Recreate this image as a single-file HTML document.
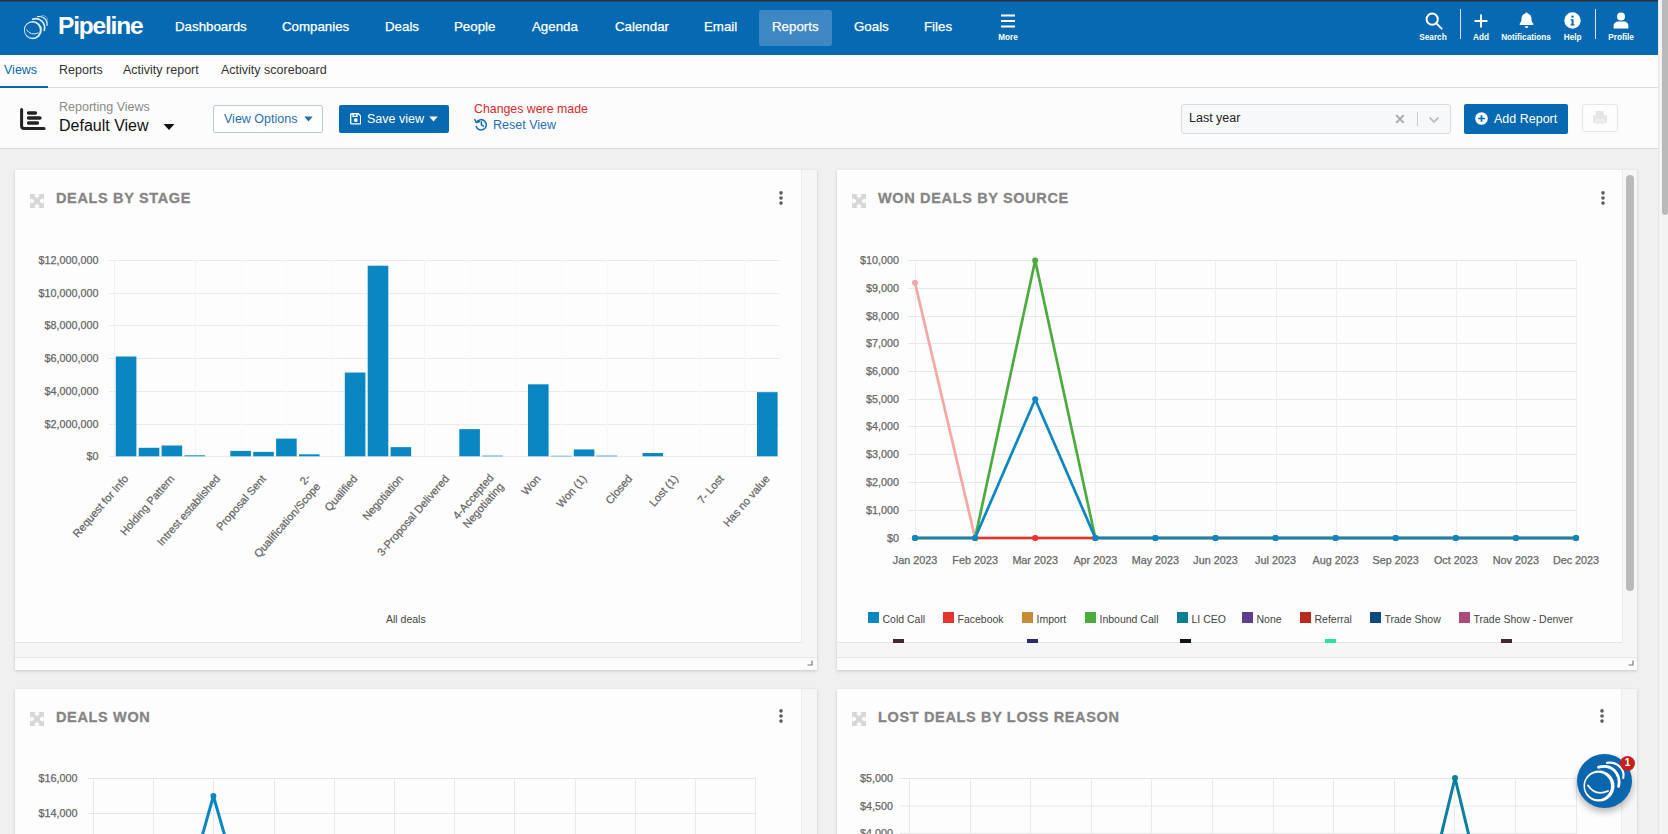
<!DOCTYPE html>
<html lang="en"><head><meta charset="utf-8"><title>Pipeline - Reports</title>
<style>
*{box-sizing:border-box;margin:0;padding:0}
html,body{width:1668px;height:834px;overflow:hidden;background:#f0f0f0;font-family:"Liberation Sans", "DejaVu Sans", sans-serif;}
body{position:relative}
.abs{position:absolute;white-space:nowrap;line-height:1}
#topline{left:0;top:0;width:1668px;height:2px;background:linear-gradient(#2f2f2f 0,#2f2f2f 1px,#1e4e78 1px)}
#nav{left:0;top:2px;width:1658px;height:53px;background:#0669b1}
.nv{color:#fff;font-size:13.3px;top:20px;-webkit-text-stroke:0.25px #fff}
.ni{color:#fff;font-size:8.2px;font-weight:bold;top:33.5px;text-align:center}
#sub{left:0;top:55px;width:1658px;height:33px;background:#fdfdfd;border-bottom:1px solid #dcdcdc}
.sb{font-size:12.5px;color:#333;top:64.4px}
#tool{left:0;top:88px;width:1658px;height:61px;background:#fcfcfc;border-bottom:1px solid #d8d8d8}
#vscroll{left:1658px;top:0;width:10px;height:834px;background:#f3f3f3;border-left:1px solid #e6e6e6}
#vthumb{left:1662px;top:0;width:6px;height:215px;background:#b9b9b9;border-radius:0 0 3px 3px}
.card{background:#f6f6f6;box-shadow:0 1px 3px rgba(0,0,0,.18)}
.inner{background:#fdfdfd;border-right:1px solid #ececec;border-bottom:1px solid #e4e4e4}
.ttl{font-size:14.5px;font-weight:bold;color:#858585;letter-spacing:0.65px;-webkit-text-stroke:0.3px #858585}
.lg{font-size:10.5px;color:#444}
svg text{font-family:"Liberation Sans", "DejaVu Sans", sans-serif;stroke:#666;stroke-width:0.25px}
</style></head>
<body>
<div class="abs" id="topline"></div>
<div class="abs" id="nav"></div>
<svg class="abs" style="left:23.300px;top:15px" width="25" height="25" viewBox="0 0 43 43" fill="none" stroke="#e3eff9" stroke-linecap="round"><path fill-rule="evenodd" d="M17 10.500a15.500 15.500 0 1 0 0 31a15.500 15.500 0 1 0 0-31zM16 12.800a13 13.200 0 1 1 0 26.400a13 13.200 0 1 1 0-26.400z" fill="#e3eff9" stroke="none"/><path d="M6 25.500Q13.500 36.500 26 31" stroke-width="1.700"/><path d="M16.500 7.200C29 3.500 39.500 13 36.600 26.500" stroke-width="2.800"/><path d="M25 2.800C35.500 1.300 43 9 41.200 18" stroke-width="2.100"/><path d="M32 0.800C38 0.500 42.500 4 42.600 9" stroke-width="1.200" opacity=".7"/></svg>
<div class="abs" style="left:58px;top:14px;font-size:24.5px;font-weight:bold;color:#fff;letter-spacing:-1.2px">Pipeline</div>
<div class="abs" style="left:759px;top:10px;width:73px;height:36px;background:#3f87c3;border-radius:3px"></div>
<div class="abs nv" id="nv_Dashboards" style="left:175px">Dashboards</div>
<div class="abs nv" id="nv_Companies" style="left:282px">Companies</div>
<div class="abs nv" id="nv_Deals" style="left:385px">Deals</div>
<div class="abs nv" id="nv_People" style="left:454px">People</div>
<div class="abs nv" id="nv_Agenda" style="left:532px">Agenda</div>
<div class="abs nv" id="nv_Calendar" style="left:615px">Calendar</div>
<div class="abs nv" id="nv_Email" style="left:704px">Email</div>
<div class="abs nv" id="nv_Reports" style="left:772px">Reports</div>
<div class="abs nv" id="nv_Goals" style="left:854px">Goals</div>
<div class="abs nv" id="nv_Files" style="left:924px">Files</div>
<svg class="abs" style="left:1001px;top:14px" width="14" height="14" viewBox="0 0 14 14"><path d="M0 1.5h14M0 7h14M0 12.5h14" stroke="#fff" stroke-width="1.9"/></svg>
<div class="abs ni" style="left:988px;width:40px">More</div>
<svg class="abs" style="left:1425px;top:12px" width="18" height="18" viewBox="0 0 18 18" fill="none" stroke="#fff" stroke-width="2"><circle cx="7.2" cy="7.2" r="5.6"/><path d="M11.4 11.4L16.6 16.6" stroke-linecap="round"/></svg>
<div class="abs ni" style="left:1408px;width:50px">Search</div>
<div class="abs" style="left:1460px;top:9px;width:1px;height:30px;background:#d5e3f0"></div>
<svg class="abs" style="left:1474px;top:14px" width="14" height="14" viewBox="0 0 14 14"><path d="M7 0.5v13M0.5 7h13" stroke="#fff" stroke-width="2"/></svg>
<div class="abs ni" style="left:1461px;width:40px">Add</div>
<svg class="abs" style="left:1519px;top:12px" width="15" height="17" viewBox="0 0 15 17" fill="#fff"><path d="M7.5 0.5c0.7 0 1.2 0.5 1.2 1.1c2.4 0.6 3.8 2.6 3.8 5.2c0 2.6 0.7 3.9 1.8 5c0.4 0.5 0.1 1.2-0.6 1.2H1.3c-0.7 0-1-0.7-0.6-1.2c1.1-1.1 1.8-2.4 1.8-5c0-2.6 1.4-4.6 3.8-5.2c0-0.6 0.5-1.1 1.2-1.1z"/><path d="M5.7 14.2h3.6c0 1-0.8 1.8-1.8 1.8s-1.8-0.8-1.8-1.8z"/></svg>
<div class="abs ni" style="left:1496px;width:60px">Notifications</div>
<svg class="abs" style="left:1564px;top:12px" width="17" height="17" viewBox="0 0 17 17"><circle cx="8.5" cy="8.5" r="8.2" fill="#fff"/><path d="M8.5 3.4a1.2 1.2 0 1 1 0 2.4a1.2 1.2 0 0 1 0-2.4zM6.6 7.2h2.9v5h1v1.2H6.6v-1.2h1V8.4h-1z" fill="#0669b1"/></svg>
<div class="abs ni" style="left:1552.600px;width:40px">Help</div>
<div class="abs" style="left:1595px;top:9px;width:1px;height:30px;background:#d5e3f0"></div>
<svg class="abs" style="left:1613px;top:12px" width="16" height="17" viewBox="0 0 16 17" fill="#fff"><circle cx="8" cy="4.4" r="4"/><path d="M0.6 16.5v-2.6c0-2.6 2.2-4.4 4.8-4.4h5.2c2.6 0 4.8 1.8 4.8 4.4v2.6z"/></svg>
<div class="abs ni" style="left:1601px;width:40px">Profile</div>
<div class="abs" id="sub"></div>
<div class="abs sb" style="left:4px;color:#0669b1">Views</div>
<div class="abs sb" style="left:59px">Reports</div>
<div class="abs sb" style="left:123px">Activity report</div>
<div class="abs sb" style="left:221px">Activity scoreboard</div>
<div class="abs" style="left:0;top:86px;width:48px;height:2px;background:#0669b1"></div>
<div class="abs" id="tool"></div>
<svg class="abs" style="left:20px;top:107px" width="26" height="24" viewBox="0 0 26 24" fill="none" stroke="#222" stroke-linecap="round" stroke-linejoin="round"><path d="M1.6 2.500v16.500c0 1.600 0.900 2.500 2.500 2.500h20" stroke-width="3"/><path d="M8.500 6h7M8.500 11h11.500M8.500 16h9" stroke-width="3.300"/></svg>
<div class="abs" style="left:59px;top:101px;font-size:12.5px;color:#8a8a8a">Reporting Views</div>
<div class="abs" style="left:59px;top:117.5px;font-size:16px;color:#111">Default View</div>
<svg class="abs" style="left:163px;top:122.500px" width="12" height="8" viewBox="0 0 12 8"><path d="M0.5 1h11L6 7z" fill="#111"/></svg>
<div class="abs" style="left:213px;top:105px;width:110px;height:28px;border:1px solid #b5cce2;border-radius:2px;background:#fff"></div>
<div class="abs" style="left:224px;top:113px;font-size:12.5px;color:#1f6fb3">View Options</div>
<svg class="abs" style="left:304px;top:116px" width="9" height="6" viewBox="0 0 9 6"><path d="M0.3 0.5h8.4L4.5 5.6z" fill="#1f6fb3"/></svg>
<div class="abs" style="left:339px;top:105px;width:110px;height:28px;border-radius:2px;background:#0669b1"></div>
<svg class="abs" style="left:349.700px;top:113px" width="11.500" height="11.500" viewBox="0 0 12 12" fill="none" stroke="#fff" stroke-width="1.400"><path d="M1.6 0.8h7l2.6 2.4v7.2a0.9 0.9 0 0 1-0.9 0.9H1.6a0.9 0.9 0 0 1-0.9-0.9V1.7a0.9 0.9 0 0 1 0.9-0.9z"/><path d="M3.2 1v2.6h4V1"/><circle cx="6" cy="7.400" r="1.300" fill="#fff"/></svg>
<div class="abs" style="left:367px;top:113px;font-size:12.5px;color:#fff">Save view</div>
<svg class="abs" style="left:429px;top:116px" width="9" height="6" viewBox="0 0 9 6"><path d="M0.3 0.5h8.4L4.5 5.6z" fill="#fff"/></svg>
<div class="abs" style="left:474px;top:103px;font-size:12.35px;color:#d42a2a">Changes were made</div>
<svg class="abs" style="left:474px;top:118px" width="14" height="13" viewBox="0 0 14 13" fill="none" stroke="#1f6fb3" stroke-width="1.600" stroke-linecap="round" stroke-linejoin="round"><path d="M2.600 4.200A5.200 5.200 0 1 1 2.200 8.600"/><path d="M0.8 1.6l1.6 3l3-1.2"/><path d="M7.4 3.8v3l2 1.4"/></svg>
<div class="abs" style="left:493px;top:119px;font-size:12.5px;color:#1f6fb3">Reset View</div>
<div class="abs" style="left:1181px;top:104px;width:270px;height:30px;border:1px solid #dcdcdc;border-radius:3px;background:#f7f8f9"></div>
<div class="abs" style="left:1189px;top:112px;font-size:12.5px;color:#222">Last year</div>
<svg class="abs" style="left:1395px;top:114px" width="10" height="10" viewBox="0 0 10 10"><path d="M1.200 1.200l7.600 7.600M8.800 1.200L1.200 8.800" stroke="#a8a8a8" stroke-width="1.900"/></svg>
<div class="abs" style="left:1417px;top:112px;width:1px;height:14px;background:#ccc"></div>
<svg class="abs" style="left:1428px;top:116px" width="12" height="8" viewBox="0 0 12 8"><path d="M1.5 1.5L6 6l4.5-4.5" fill="none" stroke="#c0c0c0" stroke-width="1.900"/></svg>
<div class="abs" style="left:1464px;top:104px;width:104px;height:30px;border-radius:2px;background:#0669b1"></div>
<svg class="abs" style="left:1475px;top:112px" width="13" height="13" viewBox="0 0 13 13"><circle cx="6.5" cy="6.5" r="6.3" fill="#fff"/><path d="M6.5 3.2v6.6M3.2 6.5h6.6" stroke="#0669b1" stroke-width="1.7"/></svg>
<div class="abs" style="left:1494px;top:113px;font-size:12.5px;color:#fff">Add Report</div>
<div class="abs" style="left:1582px;top:104px;width:36px;height:28px;border:1px solid #e6e6e6;border-radius:3px;background:#fdfdfd"></div>
<svg class="abs" style="left:1592px;top:110px" width="16" height="15" viewBox="0 0 16 15" fill="#e6e6e6"><rect x="1" y="5" width="14" height="8" rx="1"/><rect x="3.500" y="1" width="8" height="5"/><rect x="3.500" y="9" width="9" height="5" fill="#ededed"/></svg>
<div class="abs" id="vscroll"></div><div class="abs" id="vthumb"></div>
<div class="abs card" style="left:15px;top:170px;width:802px;height:500px"></div>
<div class="abs inner" style="left:15px;top:170px;width:787px;height:473px"></div>
<svg class="abs" style="left:29.7px;top:194px" width="14" height="14" viewBox="0 0 14 14" fill="#d6d6d6"><path d="M0 0h6L4.2 1.8L7 4.6L9.800 1.800L8 0h6v6l-1.800-1.800L9.400 7l2.800 2.800L14 8v6H8l1.800-1.800L7 9.400L4.200 12.200L6 14H0V8l1.800 1.800L4.600 7L1.800 4.200L0 6z"/></svg>
<div class="abs ttl" style="left:56px;top:191px">DEALS BY STAGE</div>
<svg class="abs" style="left:779px;top:191px" width="4" height="14" viewBox="0 0 4 14" fill="#5e5e5e"><circle cx="2" cy="1.900" r="1.800"/><circle cx="2" cy="7" r="1.800"/><circle cx="2" cy="12.100" r="1.800"/></svg>
<div class="abs" style="left:15px;top:657px;width:802px;height:13px;background:#fcfcfc;border-top:1px solid #e6e6e6"></div>
<svg class="abs" style="left:807px;top:660px" width="6" height="6" viewBox="0 0 6 6"><path d="M5 0.5v4.5h-4.5" fill="none" stroke="#777" stroke-width="1.2"/></svg>
<svg class="abs" style="left:0;top:230px" width="830" height="380" viewBox="0 230 830 380">
<path d="M109 456.5H779" stroke="#ebebeb" stroke-width="1"/>
<text x="98.5" y="460.0" text-anchor="end" font-size="10.8" fill="#666">$0</text>
<path d="M109 424.5H779" stroke="#ebebeb" stroke-width="1"/>
<text x="98.5" y="428.0" text-anchor="end" font-size="10.8" fill="#666">$2,000,000</text>
<path d="M109 391.5H779" stroke="#ebebeb" stroke-width="1"/>
<text x="98.5" y="395.0" text-anchor="end" font-size="10.8" fill="#666">$4,000,000</text>
<path d="M109 358.5H779" stroke="#ebebeb" stroke-width="1"/>
<text x="98.5" y="362.0" text-anchor="end" font-size="10.8" fill="#666">$6,000,000</text>
<path d="M109 325.5H779" stroke="#ebebeb" stroke-width="1"/>
<text x="98.5" y="329.0" text-anchor="end" font-size="10.8" fill="#666">$8,000,000</text>
<path d="M109 293.5H779" stroke="#ebebeb" stroke-width="1"/>
<text x="98.5" y="297.0" text-anchor="end" font-size="10.8" fill="#666">$10,000,000</text>
<path d="M109 260.5H779" stroke="#ebebeb" stroke-width="1"/>
<text x="98.5" y="264.0" text-anchor="end" font-size="10.8" fill="#666">$12,000,000</text>
<path d="M114.5 260V456" stroke="#f1f1f1" stroke-width="1"/>
<path d="M195.5 260V456" stroke="#f4f4f4" stroke-width="1"/>
<path d="M241.5 260V456" stroke="#f8f8f8" stroke-width="1"/>
<path d="M286.5 260V456" stroke="#f8f8f8" stroke-width="1"/>
<path d="M332.5 260V456" stroke="#f8f8f8" stroke-width="1"/>
<path d="M378.5 260V456" stroke="#f8f8f8" stroke-width="1"/>
<path d="M424.5 260V456" stroke="#f4f4f4" stroke-width="1"/>
<path d="M470.5 260V456" stroke="#f8f8f8" stroke-width="1"/>
<path d="M515.5 260V456" stroke="#f8f8f8" stroke-width="1"/>
<path d="M561.5 260V456" stroke="#f8f8f8" stroke-width="1"/>
<path d="M607.5 260V456" stroke="#f8f8f8" stroke-width="1"/>
<path d="M653.5 260V456" stroke="#f4f4f4" stroke-width="1"/>
<path d="M699.5 260V456" stroke="#f8f8f8" stroke-width="1"/>
<path d="M744.5 260V456" stroke="#f8f8f8" stroke-width="1"/>
<rect x="115.80" y="356.51" width="20.6" height="99.79" fill="#0a86c3"/>
<rect x="138.70" y="447.79" width="20.6" height="8.51" fill="#0a86c3"/>
<rect x="161.60" y="445.50" width="20.6" height="10.80" fill="#0a86c3"/>
<rect x="184.50" y="455.32" width="20.6" height="0.98" fill="#0a86c3"/>
<rect x="230.30" y="450.90" width="20.6" height="5.40" fill="#0a86c3"/>
<rect x="253.20" y="451.88" width="20.6" height="4.42" fill="#0a86c3"/>
<rect x="276.10" y="438.63" width="20.6" height="17.67" fill="#0a86c3"/>
<rect x="299.00" y="454.34" width="20.6" height="1.96" fill="#0a86c3"/>
<rect x="344.80" y="372.55" width="20.6" height="83.75" fill="#0a86c3"/>
<rect x="367.70" y="265.73" width="20.6" height="190.57" fill="#0a86c3"/>
<rect x="390.60" y="447.14" width="20.6" height="9.16" fill="#0a86c3"/>
<rect x="459.30" y="429.15" width="20.6" height="27.15" fill="#0a86c3"/>
<rect x="482.20" y="455.65" width="20.6" height="0.65" fill="#0a86c3"/>
<rect x="528.00" y="384.32" width="20.6" height="71.98" fill="#0a86c3"/>
<rect x="550.90" y="455.81" width="20.6" height="0.49" fill="#0a86c3"/>
<rect x="573.80" y="449.43" width="20.6" height="6.87" fill="#0a86c3"/>
<rect x="596.70" y="455.65" width="20.6" height="0.65" fill="#0a86c3"/>
<rect x="642.50" y="453.03" width="20.6" height="3.27" fill="#0a86c3"/>
<rect x="757.00" y="392.18" width="20.6" height="64.12" fill="#0a86c3"/>
<g transform="translate(122.3,473.2) rotate(-49)"><text text-anchor="end" font-size="11" fill="#666" y="9">Request for Info</text></g>
<g transform="translate(168.1,473.2) rotate(-49)"><text text-anchor="end" font-size="11" fill="#666" y="9">Holding Pattern</text></g>
<g transform="translate(213.9,473.2) rotate(-49)"><text text-anchor="end" font-size="11" fill="#666" y="9">Intrest established</text></g>
<g transform="translate(259.7,473.2) rotate(-49)"><text text-anchor="end" font-size="11" fill="#666" y="9">Proposal Sent</text></g>
<g transform="translate(305.5,473.2) rotate(-49)"><text text-anchor="end" font-size="11" fill="#666"><tspan x="0" y="7.5">2-</tspan><tspan x="0" y="20.7">Qualification/Scope</tspan></text></g>
<g transform="translate(351.3,473.2) rotate(-49)"><text text-anchor="end" font-size="11" fill="#666" y="9">Qualified</text></g>
<g transform="translate(397.1,473.2) rotate(-49)"><text text-anchor="end" font-size="11" fill="#666" y="9">Negotiation</text></g>
<g transform="translate(442.9,473.2) rotate(-49)"><text text-anchor="end" font-size="11" fill="#666" y="9">3-Proposal Delivered</text></g>
<g transform="translate(488.7,473.2) rotate(-49)"><text text-anchor="end" font-size="11" fill="#666"><tspan x="0" y="7.5">4-Accepted</tspan><tspan x="0" y="20.7">Negotiating</tspan></text></g>
<g transform="translate(534.5,473.2) rotate(-49)"><text text-anchor="end" font-size="11" fill="#666" y="9">Won</text></g>
<g transform="translate(580.3,473.2) rotate(-49)"><text text-anchor="end" font-size="11" fill="#666" y="9">Won (1)</text></g>
<g transform="translate(626.1,473.2) rotate(-49)"><text text-anchor="end" font-size="11" fill="#666" y="9">Closed</text></g>
<g transform="translate(671.9,473.2) rotate(-49)"><text text-anchor="end" font-size="11" fill="#666" y="9">Lost (1)</text></g>
<g transform="translate(717.7,473.2) rotate(-49)"><text text-anchor="end" font-size="11" fill="#666" y="9">7- Lost</text></g>
<g transform="translate(763.5,473.2) rotate(-49)"><text text-anchor="end" font-size="11" fill="#666" y="9">Has no value</text></g>
</svg>
<div class="abs lg" style="left:386px;top:614px">All deals</div>
<div class="abs card" style="left:837px;top:170px;width:800px;height:500px"></div>
<div class="abs inner" style="left:837px;top:170px;width:786px;height:473px"></div>
<svg class="abs" style="left:851.7px;top:194px" width="14" height="14" viewBox="0 0 14 14" fill="#d6d6d6"><path d="M0 0h6L4.2 1.8L7 4.6L9.800 1.800L8 0h6v6l-1.800-1.800L9.400 7l2.800 2.800L14 8v6H8l1.800-1.800L7 9.400L4.200 12.200L6 14H0V8l1.800 1.800L4.600 7L1.800 4.200L0 6z"/></svg>
<div class="abs ttl" style="left:878px;top:191px">WON DEALS BY SOURCE</div>
<svg class="abs" style="left:1601px;top:191px" width="4" height="14" viewBox="0 0 4 14" fill="#5e5e5e"><circle cx="2" cy="1.900" r="1.800"/><circle cx="2" cy="7" r="1.800"/><circle cx="2" cy="12.100" r="1.800"/></svg>
<div class="abs" style="left:837px;top:657px;width:800px;height:13px;background:#fcfcfc;border-top:1px solid #e6e6e6"></div>
<svg class="abs" style="left:1628px;top:660px" width="6" height="6" viewBox="0 0 6 6"><path d="M5 0.5v4.5h-4.5" fill="none" stroke="#777" stroke-width="1.2"/></svg>
<div class="abs" style="left:1626px;top:174.5px;width:8px;height:416px;background:#bababa;border-radius:4px"></div>
<svg class="abs" style="left:837px;top:230px" width="785" height="350" viewBox="837 230 785 350">
<path d="M908 538.5H1576" stroke="#e7e7e7" stroke-width="1"/>
<text x="899" y="542.0" text-anchor="end" font-size="10.8" fill="#666">$0</text>
<path d="M908 510.5H1576" stroke="#e7e7e7" stroke-width="1"/>
<text x="899" y="514.0" text-anchor="end" font-size="10.8" fill="#666">$1,000</text>
<path d="M908 482.5H1576" stroke="#e7e7e7" stroke-width="1"/>
<text x="899" y="486.0" text-anchor="end" font-size="10.8" fill="#666">$2,000</text>
<path d="M908 454.5H1576" stroke="#e7e7e7" stroke-width="1"/>
<text x="899" y="458.0" text-anchor="end" font-size="10.8" fill="#666">$3,000</text>
<path d="M908 426.5H1576" stroke="#e7e7e7" stroke-width="1"/>
<text x="899" y="430.0" text-anchor="end" font-size="10.8" fill="#666">$4,000</text>
<path d="M908 399.5H1576" stroke="#e7e7e7" stroke-width="1"/>
<text x="899" y="403.0" text-anchor="end" font-size="10.8" fill="#666">$5,000</text>
<path d="M908 371.5H1576" stroke="#e7e7e7" stroke-width="1"/>
<text x="899" y="375.0" text-anchor="end" font-size="10.8" fill="#666">$6,000</text>
<path d="M908 343.5H1576" stroke="#e7e7e7" stroke-width="1"/>
<text x="899" y="347.0" text-anchor="end" font-size="10.8" fill="#666">$7,000</text>
<path d="M908 316.5H1576" stroke="#e7e7e7" stroke-width="1"/>
<text x="899" y="320.0" text-anchor="end" font-size="10.8" fill="#666">$8,000</text>
<path d="M908 288.5H1576" stroke="#e7e7e7" stroke-width="1"/>
<text x="899" y="292.0" text-anchor="end" font-size="10.8" fill="#666">$9,000</text>
<path d="M908 260.5H1576" stroke="#e7e7e7" stroke-width="1"/>
<text x="899" y="264.0" text-anchor="end" font-size="10.8" fill="#666">$10,000</text>
<path d="M915.5 260V546" stroke="#eeeeee" stroke-width="1"/>
<text x="915.0" y="564" text-anchor="middle" font-size="10.8" fill="#666">Jan 2023</text>
<path d="M975.5 260V546" stroke="#eeeeee" stroke-width="1"/>
<text x="975.1" y="564" text-anchor="middle" font-size="10.8" fill="#666">Feb 2023</text>
<path d="M1035.5 260V546" stroke="#eeeeee" stroke-width="1"/>
<text x="1035.2" y="564" text-anchor="middle" font-size="10.8" fill="#666">Mar 2023</text>
<path d="M1095.5 260V546" stroke="#eeeeee" stroke-width="1"/>
<text x="1095.3" y="564" text-anchor="middle" font-size="10.8" fill="#666">Apr 2023</text>
<path d="M1155.5 260V546" stroke="#eeeeee" stroke-width="1"/>
<text x="1155.4" y="564" text-anchor="middle" font-size="10.8" fill="#666">May 2023</text>
<path d="M1215.5 260V546" stroke="#eeeeee" stroke-width="1"/>
<text x="1215.5" y="564" text-anchor="middle" font-size="10.8" fill="#666">Jun 2023</text>
<path d="M1276.5 260V546" stroke="#eeeeee" stroke-width="1"/>
<text x="1275.5" y="564" text-anchor="middle" font-size="10.8" fill="#666">Jul 2023</text>
<path d="M1336.5 260V546" stroke="#eeeeee" stroke-width="1"/>
<text x="1335.6" y="564" text-anchor="middle" font-size="10.8" fill="#666">Aug 2023</text>
<path d="M1396.5 260V546" stroke="#eeeeee" stroke-width="1"/>
<text x="1395.7" y="564" text-anchor="middle" font-size="10.8" fill="#666">Sep 2023</text>
<path d="M1456.5 260V546" stroke="#eeeeee" stroke-width="1"/>
<text x="1455.8" y="564" text-anchor="middle" font-size="10.8" fill="#666">Oct 2023</text>
<path d="M1516.5 260V546" stroke="#eeeeee" stroke-width="1"/>
<text x="1515.9" y="564" text-anchor="middle" font-size="10.8" fill="#666">Nov 2023</text>
<path d="M1576.5 260V546" stroke="#eeeeee" stroke-width="1"/>
<text x="1576.0" y="564" text-anchor="middle" font-size="10.8" fill="#666">Dec 2023</text>
<polyline points="915.0,282.7 975.1,538.0 1035.2,538.0 1095.3,538.0 1155.4,538.0 1215.5,538.0 1275.5,538.0 1335.6,538.0 1395.7,538.0 1455.8,538.0 1515.9,538.0 1576.0,538.0" fill="none" stroke="#f4a7a3" stroke-width="2.7" stroke-linejoin="round"/>
<circle cx="915.0" cy="282.7" r="3.0" fill="#f4a7a3"/>
<circle cx="975.1" cy="538.0" r="3.0" fill="#f4a7a3"/>
<circle cx="1035.2" cy="538.0" r="3.0" fill="#f4a7a3"/>
<circle cx="1095.3" cy="538.0" r="3.0" fill="#f4a7a3"/>
<circle cx="1155.4" cy="538.0" r="3.0" fill="#f4a7a3"/>
<circle cx="1215.5" cy="538.0" r="3.0" fill="#f4a7a3"/>
<circle cx="1275.5" cy="538.0" r="3.0" fill="#f4a7a3"/>
<circle cx="1335.6" cy="538.0" r="3.0" fill="#f4a7a3"/>
<circle cx="1395.7" cy="538.0" r="3.0" fill="#f4a7a3"/>
<circle cx="1455.8" cy="538.0" r="3.0" fill="#f4a7a3"/>
<circle cx="1515.9" cy="538.0" r="3.0" fill="#f4a7a3"/>
<circle cx="1576.0" cy="538.0" r="3.0" fill="#f4a7a3"/>
<polyline points="915.0,538.0 975.1,538.0 1035.2,538.0 1095.3,538.0 1155.4,538.0 1215.5,538.0 1275.5,538.0 1335.6,538.0 1395.7,538.0 1455.8,538.0 1515.9,538.0 1576.0,538.0" fill="none" stroke="#e3342f" stroke-width="2.7" stroke-linejoin="round"/>
<circle cx="915.0" cy="538.0" r="3.0" fill="#e3342f"/>
<circle cx="975.1" cy="538.0" r="3.0" fill="#e3342f"/>
<circle cx="1035.2" cy="538.0" r="3.0" fill="#e3342f"/>
<circle cx="1095.3" cy="538.0" r="3.0" fill="#e3342f"/>
<circle cx="1155.4" cy="538.0" r="3.0" fill="#e3342f"/>
<circle cx="1215.5" cy="538.0" r="3.0" fill="#e3342f"/>
<circle cx="1275.5" cy="538.0" r="3.0" fill="#e3342f"/>
<circle cx="1335.6" cy="538.0" r="3.0" fill="#e3342f"/>
<circle cx="1395.7" cy="538.0" r="3.0" fill="#e3342f"/>
<circle cx="1455.8" cy="538.0" r="3.0" fill="#e3342f"/>
<circle cx="1515.9" cy="538.0" r="3.0" fill="#e3342f"/>
<circle cx="1576.0" cy="538.0" r="3.0" fill="#e3342f"/>
<polyline points="915.0,538.0 975.1,538.0 1035.2,260.5 1095.3,538.0 1155.4,538.0 1215.5,538.0 1275.5,538.0 1335.6,538.0 1395.7,538.0 1455.8,538.0 1515.9,538.0 1576.0,538.0" fill="none" stroke="#4cab3f" stroke-width="2.7" stroke-linejoin="round"/>
<circle cx="915.0" cy="538.0" r="3.0" fill="#4cab3f"/>
<circle cx="975.1" cy="538.0" r="3.0" fill="#4cab3f"/>
<circle cx="1035.2" cy="260.5" r="3.0" fill="#4cab3f"/>
<circle cx="1095.3" cy="538.0" r="3.0" fill="#4cab3f"/>
<circle cx="1155.4" cy="538.0" r="3.0" fill="#4cab3f"/>
<circle cx="1215.5" cy="538.0" r="3.0" fill="#4cab3f"/>
<circle cx="1275.5" cy="538.0" r="3.0" fill="#4cab3f"/>
<circle cx="1335.6" cy="538.0" r="3.0" fill="#4cab3f"/>
<circle cx="1395.7" cy="538.0" r="3.0" fill="#4cab3f"/>
<circle cx="1455.8" cy="538.0" r="3.0" fill="#4cab3f"/>
<circle cx="1515.9" cy="538.0" r="3.0" fill="#4cab3f"/>
<circle cx="1576.0" cy="538.0" r="3.0" fill="#4cab3f"/>
<polyline points="915.0,538.0 975.1,538.0 1035.2,399.2 1095.3,538.0 1155.4,538.0 1215.5,538.0 1275.5,538.0 1335.6,538.0 1395.7,538.0 1455.8,538.0 1515.9,538.0 1576.0,538.0" fill="none" stroke="#0a86c3" stroke-width="2.7" stroke-linejoin="round"/>
<circle cx="915.0" cy="538.0" r="3.0" fill="#0a86c3"/>
<circle cx="975.1" cy="538.0" r="3.0" fill="#0a86c3"/>
<circle cx="1035.2" cy="399.2" r="3.0" fill="#0a86c3"/>
<circle cx="1095.3" cy="538.0" r="3.0" fill="#0a86c3"/>
<circle cx="1155.4" cy="538.0" r="3.0" fill="#0a86c3"/>
<circle cx="1215.5" cy="538.0" r="3.0" fill="#0a86c3"/>
<circle cx="1275.5" cy="538.0" r="3.0" fill="#0a86c3"/>
<circle cx="1335.6" cy="538.0" r="3.0" fill="#0a86c3"/>
<circle cx="1395.7" cy="538.0" r="3.0" fill="#0a86c3"/>
<circle cx="1455.8" cy="538.0" r="3.0" fill="#0a86c3"/>
<circle cx="1515.9" cy="538.0" r="3.0" fill="#0a86c3"/>
<circle cx="1576.0" cy="538.0" r="3.0" fill="#0a86c3"/>
</svg>
<div class="abs" style="left:868px;top:612px;width:11px;height:11px;background:#0a86c3"></div>
<div class="abs lg" style="left:882.5px;top:614px">Cold Call</div>
<div class="abs" style="left:943px;top:612px;width:11px;height:11px;background:#e3342f"></div>
<div class="abs lg" style="left:957.5px;top:614px">Facebook</div>
<div class="abs" style="left:1022px;top:612px;width:11px;height:11px;background:#c78a35"></div>
<div class="abs lg" style="left:1036.5px;top:614px">Import</div>
<div class="abs" style="left:1085px;top:612px;width:11px;height:11px;background:#4cab3f"></div>
<div class="abs lg" style="left:1099.5px;top:614px">Inbound Call</div>
<div class="abs" style="left:1177px;top:612px;width:11px;height:11px;background:#0a7f8f"></div>
<div class="abs lg" style="left:1191.5px;top:614px">LI CEO</div>
<div class="abs" style="left:1242px;top:612px;width:11px;height:11px;background:#5b3f8c"></div>
<div class="abs lg" style="left:1256.5px;top:614px">None</div>
<div class="abs" style="left:1300px;top:612px;width:11px;height:11px;background:#b82a1e"></div>
<div class="abs lg" style="left:1314.5px;top:614px">Referral</div>
<div class="abs" style="left:1370px;top:612px;width:11px;height:11px;background:#0b4c80"></div>
<div class="abs lg" style="left:1384.5px;top:614px">Trade Show</div>
<div class="abs" style="left:1459px;top:612px;width:11px;height:11px;background:#a94a7c"></div>
<div class="abs lg" style="left:1473.5px;top:614px">Trade Show - Denver</div>
<div class="abs" style="left:893px;top:639px;width:11px;height:4px;background:#4a2530"></div>
<div class="abs" style="left:1027px;top:639px;width:11px;height:4px;background:#2b2a6b"></div>
<div class="abs" style="left:1180px;top:639px;width:11px;height:4px;background:#0a1a0a"></div>
<div class="abs" style="left:1325px;top:639px;width:11px;height:4px;background:#21e6a0"></div>
<div class="abs" style="left:1501px;top:639px;width:11px;height:4px;background:#4a2530"></div>
<div class="abs card" style="left:15px;top:689px;width:802px;height:160px"></div>
<div class="abs inner" style="left:15px;top:689px;width:787px;height:160px"></div>
<svg class="abs" style="left:29.7px;top:712px" width="14" height="14" viewBox="0 0 14 14" fill="#d6d6d6"><path d="M0 0h6L4.2 1.8L7 4.6L9.800 1.800L8 0h6v6l-1.800-1.800L9.400 7l2.800 2.800L14 8v6H8l1.800-1.800L7 9.400L4.200 12.200L6 14H0V8l1.800 1.800L4.600 7L1.800 4.200L0 6z"/></svg>
<div class="abs ttl" style="left:56px;top:709.5px">DEALS WON</div>
<svg class="abs" style="left:779px;top:709px" width="4" height="14" viewBox="0 0 4 14" fill="#5e5e5e"><circle cx="2" cy="1.900" r="1.800"/><circle cx="2" cy="7" r="1.800"/><circle cx="2" cy="12.100" r="1.800"/></svg>
<svg class="abs" style="left:15px;top:760px" width="787" height="74" viewBox="15 760 787 74">
<path d="M88 778.5H755" stroke="#e6e6e6"/>
<text x="77.500" y="782.0" text-anchor="end" font-size="10.8" fill="#666">$16,000</text>
<path d="M88 813.5H755" stroke="#e6e6e6"/>
<text x="77.500" y="817.0" text-anchor="end" font-size="10.8" fill="#666">$14,000</text>
<path d="M93.5 778V834" stroke="#e9e9e9"/>
<path d="M153.5 778V834" stroke="#e9e9e9"/>
<path d="M213.5 778V834" stroke="#e9e9e9"/>
<path d="M274.5 778V834" stroke="#e9e9e9"/>
<path d="M334.5 778V834" stroke="#e9e9e9"/>
<path d="M394.5 778V834" stroke="#e9e9e9"/>
<path d="M454.5 778V834" stroke="#e9e9e9"/>
<path d="M514.5 778V834" stroke="#e9e9e9"/>
<path d="M575.5 778V834" stroke="#e9e9e9"/>
<path d="M635.5 778V834" stroke="#e9e9e9"/>
<path d="M695.5 778V834" stroke="#e9e9e9"/>
<path d="M755.5 778V834" stroke="#e9e9e9"/>
<polyline points="201,840 213.4,796 226,840" fill="none" stroke="#0a86c3" stroke-width="3" stroke-linejoin="round"/><circle cx="213.4" cy="796" r="3" fill="#0a86c3"/>
</svg>
<div class="abs card" style="left:837px;top:689px;width:800px;height:160px"></div>
<div class="abs inner" style="left:837px;top:689px;width:785px;height:160px"></div>
<svg class="abs" style="left:851.7px;top:712px" width="14" height="14" viewBox="0 0 14 14" fill="#d6d6d6"><path d="M0 0h6L4.2 1.8L7 4.6L9.800 1.800L8 0h6v6l-1.800-1.800L9.400 7l2.800 2.800L14 8v6H8l1.800-1.800L7 9.400L4.200 12.200L6 14H0V8l1.800 1.800L4.600 7L1.800 4.200L0 6z"/></svg>
<div class="abs ttl" style="left:878px;top:709.5px">LOST DEALS BY LOSS REASON</div>
<svg class="abs" style="left:1600px;top:709px" width="4" height="14" viewBox="0 0 4 14" fill="#5e5e5e"><circle cx="2" cy="1.900" r="1.800"/><circle cx="2" cy="7" r="1.800"/><circle cx="2" cy="12.100" r="1.800"/></svg>
<svg class="abs" style="left:837px;top:760px" width="785" height="74" viewBox="837 760 785 74">
<path d="M900 778.5H1576" stroke="#e6e6e6"/>
<text x="893" y="782.0" text-anchor="end" font-size="10.8" fill="#666">$5,000</text>
<path d="M900 806.0H1576" stroke="#e6e6e6"/>
<text x="893" y="809.5" text-anchor="end" font-size="10.8" fill="#666">$4,500</text>
<path d="M900 833.5H1576" stroke="#e6e6e6"/>
<text x="893" y="837.0" text-anchor="end" font-size="10.8" fill="#666">$4,000</text>
<path d="M909.5 778V834" stroke="#e9e9e9"/>
<path d="M970.5 778V834" stroke="#e9e9e9"/>
<path d="M1030.5 778V834" stroke="#e9e9e9"/>
<path d="M1091.5 778V834" stroke="#e9e9e9"/>
<path d="M1151.5 778V834" stroke="#e9e9e9"/>
<path d="M1212.5 778V834" stroke="#e9e9e9"/>
<path d="M1273.5 778V834" stroke="#e9e9e9"/>
<path d="M1333.5 778V834" stroke="#e9e9e9"/>
<path d="M1394.5 778V834" stroke="#e9e9e9"/>
<path d="M1454.5 778V834" stroke="#e9e9e9"/>
<path d="M1515.5 778V834" stroke="#e9e9e9"/>
<path d="M1576.5 778V834" stroke="#e9e9e9"/>
<polyline points="1440,840 1455,778 1470,840" fill="none" stroke="#0a7f9f" stroke-width="3" stroke-linejoin="round"/><circle cx="1455" cy="778" r="3" fill="#0a7f9f"/>
</svg>
<div class="abs" style="left:1577px;top:754px;width:55px;height:54px;border-radius:50%;background:#0a66ad;box-shadow:0 4px 7px rgba(0,0,0,.28)"></div>
<svg class="abs" style="left:1582px;top:760px" width="43" height="43" viewBox="0 0 43 43" fill="none" stroke="#fff" stroke-linecap="round"><path fill-rule="evenodd" d="M17 10.500a15.500 15.500 0 1 0 0 31a15.500 15.500 0 1 0 0-31zM16 12.800a13 13.200 0 1 1 0 26.400a13 13.200 0 1 1 0-26.400z" fill="#fff" stroke="none"/><path d="M6 25.500Q13.500 36.500 26 31" stroke-width="1.700"/><path d="M16.500 7.200C29 3.500 39.500 13 36.600 26.500" stroke-width="2.800"/><path d="M25 2.800C35.500 1.300 43 9 41.200 18" stroke-width="2.100"/></svg>
<div class="abs" style="left:1620px;top:755.500px;width:15px;height:15px;border-radius:50%;background:#c5221f"></div>
<div class="abs" style="left:1620px;top:758px;width:15px;text-align:center;font-size:10px;font-weight:bold;color:#fff">1</div>
</body></html>
